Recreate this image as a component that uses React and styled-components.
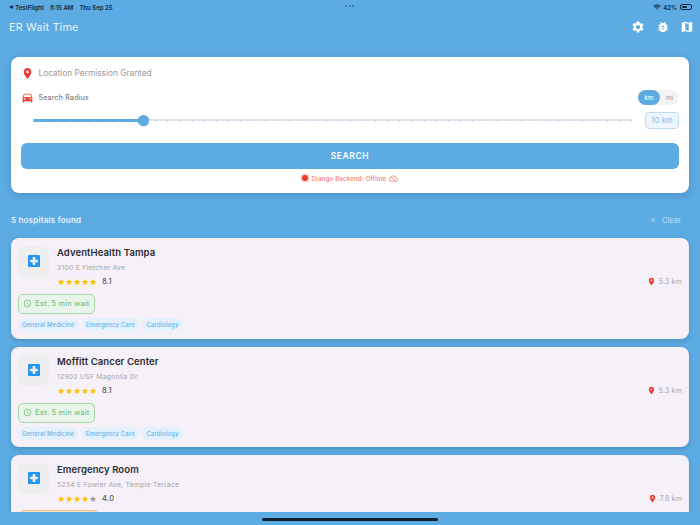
import React from "react";
import styled, { createGlobalStyle } from "styled-components";
import {
  MdLocationOn, MdDirectionsCar, MdSettings, MdBugReport, MdMap, MdLocalHospital,
  MdStar, MdAccessTime, MdOutlineCloudOff, MdClose, MdWifi,
} from "react-icons/md";

const Global = createGlobalStyle`
  html, body { margin: 0; padding: 0; }
  body { font-family: Inter, "Liberation Sans", sans-serif; background: #5dabe3; }
  * { box-sizing: border-box; }
`;

const Screen = styled.div`
  position: relative; width: 700px; height: 525px; overflow: hidden;
  background: #5dabe3; display: flex; flex-direction: column;
`;
const StatusBar = styled.div`
  height: 14px; padding: 0 8px 0 9px; display: flex; align-items: center;
  justify-content: space-between; font-size: 6px; font-weight: 600; color: #10263a;
  position: relative; flex: none;
`;
const StatusGroup = styled.div`display: flex; align-items: center; gap: ${p => p.$gap}px;`;
const BackGlyph = styled.span`font-size: 4.5px; margin-right: -4px;`;
const Dots = styled.div`
  position: absolute; left: 345px; top: 5px; display: flex; gap: 1.5px;
  i { width: 2px; height: 2px; border-radius: 50%; background: #2f6f9f; display: block; }
`;
const Battery = styled.div`
  width: 12px; height: 6px; border: 0.6px solid #10263a; border-radius: 2px; padding: 0.8px; margin-left: 1px;
  i { display: block; width: 5px; height: 100%; background: #10263a; border-radius: 1px; }
`;
const Header = styled.div`
  height: 26px; flex: none; padding: 0 6px 0 9px; display: flex; align-items: center; justify-content: space-between;
`;
const Title = styled.div`font-size: 10.8px; letter-spacing: 0.2px; color: #e6f2fb; font-weight: 400;`;
const HeaderIcons = styled.div`
  display: flex; gap: 10.5px; color: #fff; align-items: center; font-size: 14px;
  svg { display: block; }
`;
const Content = styled.div`flex: none; height: 472px; overflow: hidden; padding: 17px 11px 0;`;
const SearchCard = styled.div`
  background: #fff; border-radius: 8px; height: 136px; padding: 8px 10px 0;
  box-shadow: 0 2px 6px rgba(20, 60, 100, 0.25); display: flex; flex-direction: column;
`;
const LocRow = styled.div`
  height: 16px; display: flex; align-items: center; gap: 4.5px; font-size: 8.3px; color: #9a9a9a;
  svg { color: #f0392f; font-size: 13px; flex: none; }
`;
const RadiusRow = styled.div`
  margin-top: 8px; height: 16px; display: flex; align-items: center; gap: 4.5px;
  font-size: 7px; font-weight: 500; letter-spacing: 0.2px; color: #7f7f7f;
  svg { color: #f0443a; font-size: 13px; flex: none; }
`;
const Spacer = styled.div`flex: 1;`;
const Toggle = styled.div`display: flex; width: 41px; height: 15px; background: #f3f3f3; border-radius: 8px; font-size: 6px; font-weight: 500;`;
const ToggleOpt = styled.div`
  flex: 1; display: flex; align-items: center; justify-content: center; border-radius: 8px;
  background: ${p => (p.$on ? "#5dabe3" : "transparent")}; color: ${p => (p.$on ? "#fff" : "#a0a0a0")};
  &:first-child { flex: none; width: 22px; }
`;
const SliderRow = styled.div`margin-top: 6px; height: 18px; display: flex; align-items: center; padding-left: 12px; gap: 13px;`;
const Track = styled.div`
  position: relative; width: 599px; height: 2px; border-radius: 1px; background: #e6dfec;
`;
const Fill = styled.div`position: absolute; left: 0; top: -0.5px; bottom: -0.5px; background: #5dabe3; border-radius: 2px;`;
const Ticks = styled.div`
  position: absolute; inset: 0; display: flex; justify-content: space-between; align-items: center;
  i { display: block; width: 1px; height: 1px; border-radius: 50%; background: #74b6e8; }
  i.done { background: #a9d2ef; }
`;
const Thumb = styled.div`
  position: absolute; top: -4.5px; width: 11px; height: 11px; margin-left: -5.5px; border-radius: 50%;
  background: #5dabe3; box-shadow: 0 0.5px 1.5px rgba(0,0,0,0.2);
`;
const ValueBox = styled.div`
  width: 34px; height: 17px; border: 1px solid #bcdcf4; background: #eef6fc; border-radius: 4px;
  font-size: 7.5px; font-weight: 500; letter-spacing: 0.2px; color: #8cc4ec; display: flex; align-items: center; justify-content: center;
`;
const SearchButton = styled.div`
  margin-top: 14px; height: 26px; border-radius: 6px; background: #5dabe3; color: #fff;
  font-size: 8.5px; font-weight: 600; letter-spacing: 0.6px;
  display: flex; align-items: center; justify-content: center;
`;
const Backend = styled.div`
  margin-top: 3px; height: 12px; display: flex; align-items: center; justify-content: center; gap: 3px;
  font-size: 6.2px; font-weight: 500; color: #f77b72; letter-spacing: 0.15px;
  svg { font-size: 9px; }
`;
const RedDot = styled.span`
  width: 6px; height: 6px; margin-right: 1px; border-radius: 50%; background: #f0392f; box-shadow: 0 0 2px 1px rgba(240,57,47,0.35);
`;
const ResultsHeader = styled.div`
  margin-top: 17px; height: 20px; display: flex; align-items: center; justify-content: space-between; padding-right: 8px;
`;
const Found = styled.div`font-size: 8px; font-weight: 600; letter-spacing: 0.2px; color: #e6f2fb;`;
const Clear = styled.div`
  display: flex; align-items: center; gap: 5px; font-size: 7.5px; font-weight: 500; color: #b5d8f2;
  svg { font-size: 8px; }
`;
const HospitalCard = styled.div`
  margin-top: 8px; height: ${p => p.$h}px; background: #f6f1f9; border-radius: 8px;
  box-shadow: 0 1.5px 4px rgba(20, 60, 100, 0.25); padding: 8px 7px 0 7px; display: flex; flex-direction: column;
`;
const TopRow = styled.div`display: flex; gap: 8px; height: 48px;`;
const IconTile = styled.div`
  width: 31px; height: 30.5px; border-radius: 5px; background: #eeeeee; display: flex; align-items: center; justify-content: center;
  color: #2196f3; font-size: 16px; flex: none;
`;
const Info = styled.div`flex: 1; display: flex; flex-direction: column; padding-top: 0.7px;`;
const Name = styled.div`font-size: 9.5px; font-weight: 600; letter-spacing: 0.1px; color: #2b2b2f; line-height: 12px;`;
const Address = styled.div`font-size: 6.8px; letter-spacing: 0.25px; color: #a5a3a8; line-height: 10px; margin-top: 4px;`;
const RatingRow = styled.div`display: flex; align-items: center; height: 10px; margin-top: 4px;`;
const Stars = styled.div`display: flex; margin-right: 5px; svg { font-size: 8px; display: block; }`;
const Rate = styled.div`font-size: 7.5px; font-weight: 500; letter-spacing: 0.2px; color: #55545a;`;
const Distance = styled.div`
  align-self: flex-end; display: flex; align-items: center; gap: 2.5px; font-size: 7px; letter-spacing: 0.2px; color: #a5a3a8; margin-bottom: 8px;
  svg { font-size: 9px; color: #f0392f; }
`;
const Wait = styled.div`
  width: 77px; height: 19.5px; border-radius: 5px; border: 1px solid #a5d6a7; background: #e9f5ea;
  display: flex; align-items: center; justify-content: center; gap: 3px; color: #78bf7c;
  font-size: 7.2px; font-weight: 500; letter-spacing: 0.3px; flex: none;
  svg { font-size: 9px; }
`;
const WarnWait = styled(Wait)`
  width: 80px; margin-top: -1px; margin-left: 1px; border-color: #f5c284; background: #fbe0bc;
`;
const Tags = styled.div`display: flex; gap: 3.5px; margin-top: 4.5px;`;
const Tag = styled.div`
  height: 13px; padding: 0 4px; border-radius: 7px; background: #e3f1fd; color: #6cb2ec;
  display: flex; align-items: center; font-size: 6px; font-weight: 500; letter-spacing: 0.12px;
`;
const HomeBar = styled.div`
  position: absolute; left: 262px; top: 518px; width: 176px; height: 3px; border-radius: 2px; background: #10202c;
`;

const hospitals = [
  { name: "AdventHealth Tampa", addr: "3100 E Fletcher Ave", stars: 5, rate: "8.1", dist: "5.3 km", h: 101 },
  { name: "Moffitt Cancer Center", addr: "12902 USF Magnolia Dr", stars: 5, rate: "8.1", dist: "5.3 km", h: 100 },
  { name: "Emergency Room", addr: "5234 E Fowler Ave, Temple Terrace", stars: 4, rate: "4.0", dist: "7.8 km", h: 101, warn: true },
];
const tags = ["General Medicine", "Emergency Care", "Cardiology"];

function Hospital({ h }) {
  return (
    <HospitalCard $h={h.h}>
      <TopRow>
        <IconTile><MdLocalHospital /></IconTile>
        <Info>
          <Name>{h.name}</Name>
          <Address>{h.addr}</Address>
          <RatingRow>
            <Stars>
              {[0, 1, 2, 3, 4].map(i => <MdStar key={i} color={i < h.stars ? "#ffc107" : "#9e9e9e"} />)}
            </Stars>
            <Rate>{h.rate}</Rate>
          </RatingRow>
        </Info>
        <Distance><MdLocationOn />{h.dist}</Distance>
      </TopRow>
      {h.warn ? (
        <WarnWait />
      ) : (
        <>
          <Wait><MdAccessTime />Est. 5 min wait</Wait>
          <Tags>{tags.map(t => <Tag key={t}>{t}</Tag>)}</Tags>
        </>
      )}
    </HospitalCard>
  );
}

export default function App() {
  const ticks = Array.from({ length: 50 }, (_, i) => i);
  return (
    <Screen>
      <Global />
      <StatusBar>
        <StatusGroup $gap={6}>
          <BackGlyph>◀</BackGlyph>
          <span>TestFlight</span>
          <span>8:15 AM</span>
          <span>Thu Sep 25</span>
        </StatusGroup>
        <Dots><i /><i /><i /></Dots>
        <StatusGroup $gap={2}>
          <MdWifi size={8} />
          <span>42%</span>
          <Battery><i /></Battery>
        </StatusGroup>
      </StatusBar>
      <Header>
        <Title>ER Wait Time</Title>
        <HeaderIcons>
          <MdSettings />
          <MdBugReport />
          <MdMap />
        </HeaderIcons>
      </Header>
      <Content>
        <SearchCard>
          <LocRow><MdLocationOn />Location Permission Granted</LocRow>
          <RadiusRow>
            <MdDirectionsCar />Search Radius
            <Spacer />
            <Toggle>
              <ToggleOpt $on>km</ToggleOpt>
              <ToggleOpt>mi</ToggleOpt>
            </Toggle>
          </RadiusRow>
          <SliderRow>
            <Track>
              <Fill style={{ width: "18.37%" }} />
              <Ticks>{ticks.map(i => <i key={i} className={i < 10 ? "done" : ""} />)}</Ticks>
              <Thumb style={{ left: "18.37%" }} />
            </Track>
            <ValueBox>10 km</ValueBox>
          </SliderRow>
          <SearchButton>SEARCH</SearchButton>
          <Backend><RedDot />Django Backend: Offline<MdOutlineCloudOff /></Backend>
        </SearchCard>
        <ResultsHeader>
          <Found>5 hospitals found</Found>
          <Clear><MdClose />Clear</Clear>
        </ResultsHeader>
        {hospitals.map(h => <Hospital key={h.name} h={h} />)}
      </Content>
      <HomeBar />
    </Screen>
  );
}
